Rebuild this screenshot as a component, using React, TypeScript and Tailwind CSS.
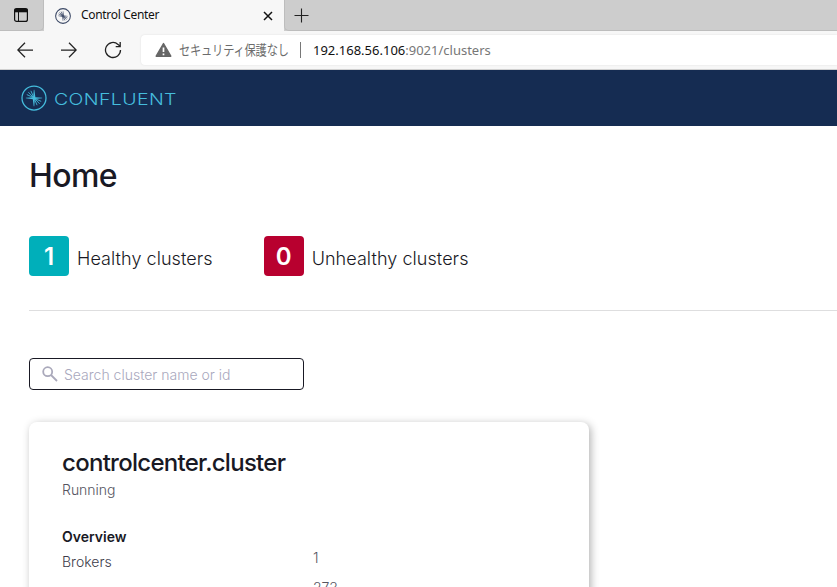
import React from "react";

const ui = "font-['Noto_Sans','Noto_Sans_CJK_JP',sans-serif]";

function Burst({ className, width }: { className: string; width: number }) {
  return (
    <svg viewBox="0 0 26 26" className={className} fill="none" stroke="currentColor" strokeWidth={width}>
      <circle cx="13" cy="13" r="12" />
      <g strokeWidth={width * 0.7}>
        <path d="M5.8 9.6 12.5 12.6M7.4 7.2 12.5 12.6M9.9 5.8 12.8 12.6M20.2 16.4 13.5 13.4M18.6 18.8 13.5 13.4M16.1 20.2 13.2 13.4" />
      </g>
      <path fill="currentColor" stroke="none" d="M13.3 4.8 14.4 12.2 21.2 12.8V13.3L13.8 13.9 13.3 21.2H12.7L11.8 14.2 4.8 13.2V12.7L12.2 12.2 12.8 4.8Z" />
    </svg>
  );
}

function TabStrip() {
  return (
    <div className="flex h-[31px] bg-[#cdcdcd]">
      <div className="flex w-11 items-center justify-center rounded-br-[5px] border-b border-r border-[#bdbdbd]">
        <svg viewBox="0 0 16 16" className="mr-0.5 size-4" fill="none" stroke="#111">
          <rect x="1.6" y="1.6" width="12.8" height="12.8" rx="2" strokeWidth="1.2" />
          <path d="M1.5 3.5h13" strokeWidth="3.6" />
          <path d="M5.5 5v9.5" strokeWidth="1" />
        </svg>
      </div>
      <div className="flex w-60 items-center bg-[#f7f7f7] pl-[11px] pr-[11px]">
        <Burst className="size-4 text-[#3c4966]" width={1.7} />
        <span className={`-mt-px ml-[10px] whitespace-nowrap text-[12px] tracking-[-0.32px] text-[#111] ${ui}`}>Control Center</span>
        <svg viewBox="0 0 10 10" className="ml-auto size-[10px]" stroke="#111" strokeWidth="1.5">
          <path d="m1 1 8 8M9 1 1 9" />
        </svg>
      </div>
      <div className="flex flex-1 items-center rounded-bl-[5px] border-b border-l border-[#bdbdbd] pl-[9px]">
        <svg viewBox="0 0 15 15" className="size-[15px]" stroke="#222" strokeWidth="1.1">
          <path d="M7.5.5v14M.5 7.5h14" />
        </svg>
      </div>
    </div>
  );
}

function AddressBar() {
  return (
    <div className="flex h-[39px] items-center border-b border-[#d0d0d0] bg-[#f7f7f7] pl-[17px]">
      <svg viewBox="0 0 16 16" className="size-4" fill="none" stroke="#222" strokeWidth="1.25">
        <path d="M16 8H.8M8 .8.8 8 8 15.2" />
      </svg>
      <svg viewBox="0 0 16 16" className="ml-7 size-4" fill="none" stroke="#222" strokeWidth="1.25">
        <path d="M0 8h15.2M8 .8 15.2 8 8 15.2" />
      </svg>
      <svg viewBox="0 0 18 18" className="ml-[27px] size-[18px]" fill="none" stroke="#222" strokeWidth="1.3">
        <path d="M16.5 9a7.5 7.5 0 1 1-2.5-5.6l2 1.9M16.2 1v4.6h-4.5" />
      </svg>
      <div className="ml-[19px] flex h-[30px] flex-1 items-center rounded-l-[4px] bg-white pl-[14px] shadow-[0_0_2px_#ddd]">
        <svg viewBox="0 0 17 16" className="h-4 w-[17px]">
          <path d="M8.5 1.5 15.8 14.2H1.2Z" fill="#666" stroke="#666" strokeWidth="1.4" strokeLinejoin="round" />
          <path d="M8.5 5.5v4.5M8.5 11.5v1.8" stroke="#fff" strokeWidth="1.7" />
        </svg>
        <span className={`-mt-px ml-[7px] w-[110px] origin-left scale-x-[0.8] whitespace-nowrap text-[14px] leading-5 tracking-[-0.2px] text-[#6c6c6c] ${ui}`}>
          セキュリティ保護なし
        </span>
        <span className="ml-[11px] h-4 w-px bg-[#777]" />
        <span className={`-mt-px ml-3 whitespace-nowrap text-[13px] leading-5 text-[#111] ${ui}`}>
          192.168.56.106<span className="text-[#777]">:9021/clusters</span>
        </span>
      </div>
    </div>
  );
}

function Count({ value, label, color }: { value: string; label: string; color: string }) {
  return (
    <div className="flex h-10 items-center">
      <span className={`flex size-10 items-center justify-center rounded-[4px] pt-px text-[24px] font-semibold text-white ${color}`}>{value}</span>
      <span className="ml-2 mt-[5px] whitespace-nowrap text-[18px] font-light tracking-[0.06px] text-[#191924]">{label}</span>
    </div>
  );
}

export default function App() {
  return (
    <div className="h-[587px] w-full overflow-hidden bg-white font-['Inter',sans-serif] text-[#191924]">
      <TabStrip />
      <AddressBar />
      <header className="flex h-14 items-center bg-[#152c52] pl-[21px] text-[#45bddd]">
        <Burst className="size-[26px]" width={1.25} />
        <span className="ml-[7px] mt-px origin-left scale-x-[1.22] text-[16px] font-light tracking-[0.3px]">CONFLUENT</span>
      </header>
      <main className="pl-[29px] pt-[30px]">
        <h1 className="text-[32px] font-medium leading-10 tracking-[-0.6px]">Home</h1>
        <div className="mt-10 flex gap-[51px]">
          <Count value="1" label="Healthy clusters" color="bg-[#00afba]" />
          <Count value="0" label="Unhealthy clusters" color="bg-[#b8002f]" />
        </div>
        <div className="mt-[34px] h-px bg-[#dededf]" />
        <div className="mt-[47px] flex h-8 w-[275px] items-center rounded-[4px] border border-[#191924] pl-[11.5px]">
          <svg viewBox="0 0 16 16" className="size-4 text-[#aaa9bb]" fill="none" stroke="currentColor" strokeWidth="1.8">
            <circle cx="5.7" cy="5.7" r="4.5" />
            <path d="m9 9 6 6" />
          </svg>
          <span className="ml-[6.5px] text-[14px] font-light text-[#a9a8bd]">Search cluster name or id</span>
        </div>
        <section className="mt-8 h-[300px] w-[560px] rounded-[8px] bg-white pl-[33px] pt-[27px] shadow-[2px_2px_8px_rgba(0,0,0,0.3)]">
          <h2 className="text-[24px] font-medium leading-7 tracking-[-0.72px]">controlcenter.cluster</h2>
          <p className="mt-[3px] text-[14px] font-light leading-5 text-[#55555f]">Running</p>
          <h3 className="mt-[27px] text-[14px] font-semibold leading-5">Overview</h3>
          <div className="grid grid-cols-[251px_1fr] text-[14px] font-light text-[#3c3c49]">
            <div className="pt-[5px] leading-5">
              <p>Brokers</p>
              <p className="mt-[10.5px]">Partitions</p>
            </div>
            <div className="pt-px leading-5 text-[#55555f]">
              <p>1</p>
              <p className="mt-[10px]">273</p>
            </div>
          </div>
        </section>
      </main>
    </div>
  );
}
